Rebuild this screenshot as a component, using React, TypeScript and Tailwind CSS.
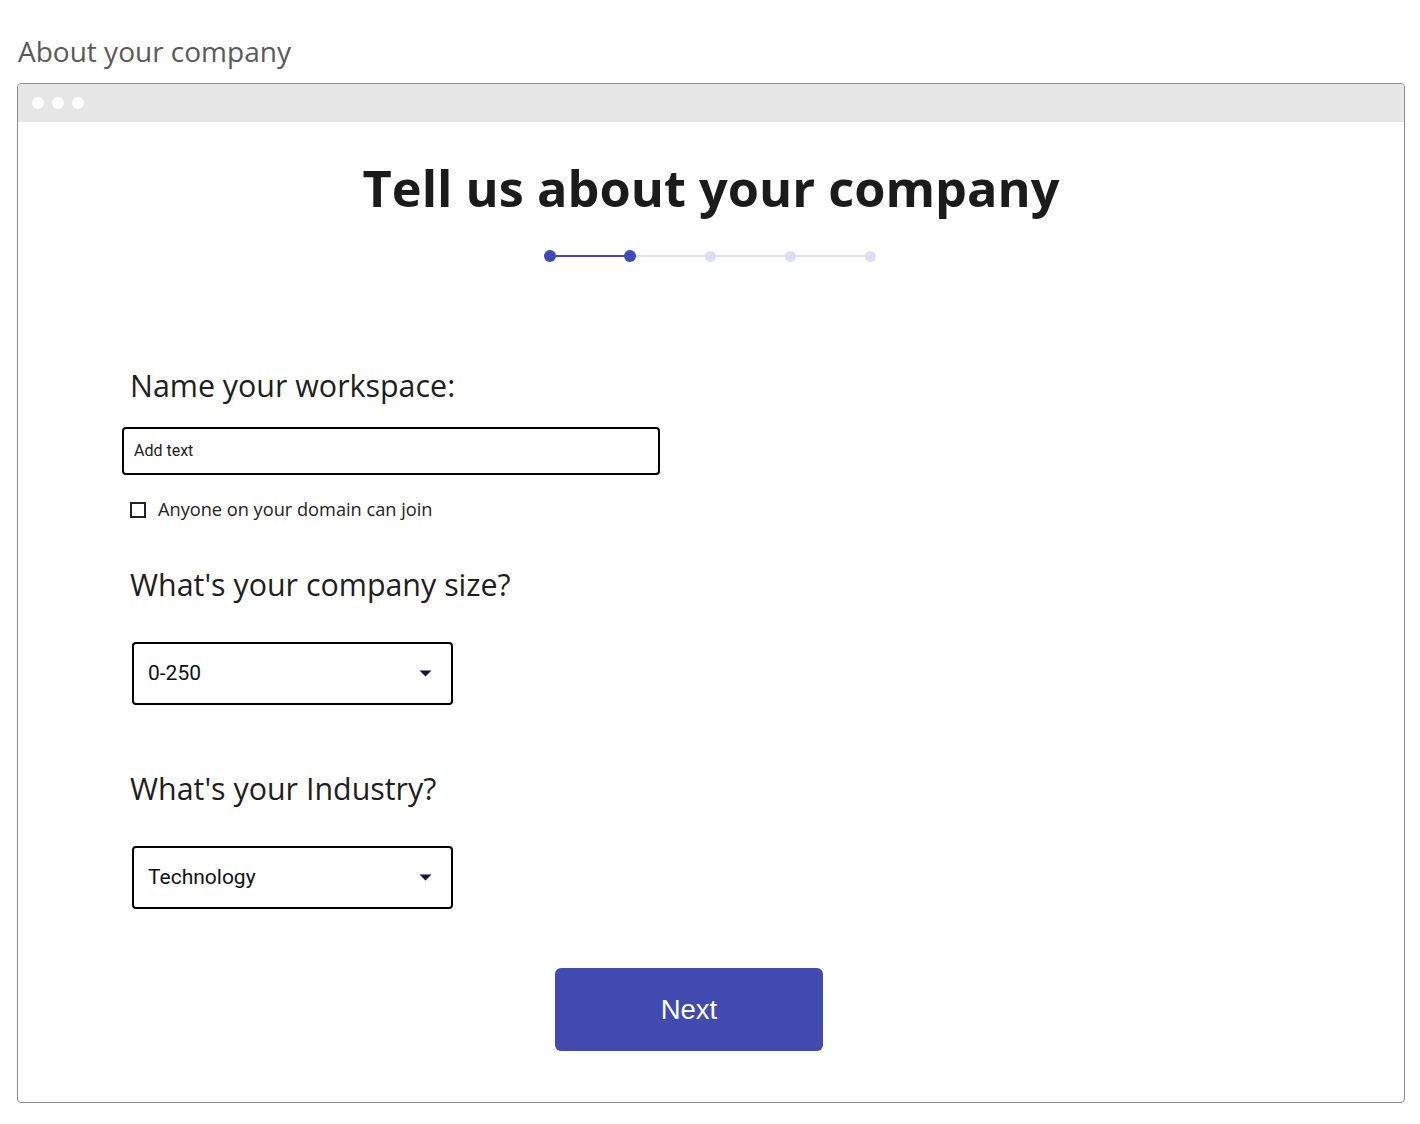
import React from "react";

const Caret = () => (
  <svg width="13" height="7" viewBox="0 0 13 7" className="shrink-0">
    <path d="M0.5 0.5 H12.5 L6.5 6.5 Z" fill="#14123a" />
  </svg>
);

function Select({ value }: { value: string }) {
  return (
    <div className="ml-[10px] flex h-[63px] w-[321px] items-center justify-between rounded-[4px] border-2 border-black pl-[14px] pr-[19px]">
      <span className="text-[21px] text-[#111] [font-family:Roboto,'Liberation_Sans',sans-serif]">{value}</span>
      <Caret />
    </div>
  );
}

export default function App() {
  const dots = [0, 1, 2, 3, 4];
  return (
    <div className="h-[1124px] w-[1420px] bg-white pl-[17px] pt-[33px] [font-family:'Open_Sans',sans-serif]">
      <h1 className="ml-[1px] text-[28px] leading-[36px] text-[#5a5a5a]">About your company</h1>
      <div className="mt-[14px] h-[1020px] w-[1388px] overflow-hidden rounded-[4px] border border-[#8c8c8c]">
        <div className="flex h-[38px] items-center gap-[8px] bg-[#e6e6e6] pl-[14px]">
          <span className="h-[12px] w-[12px] rounded-full bg-white" />
          <span className="h-[12px] w-[12px] rounded-full bg-white" />
          <span className="h-[12px] w-[12px] rounded-full bg-white" />
        </div>
        <div className="flex flex-col items-center pt-[36px]">
          <h2 className="text-[50.5px] font-bold leading-[60px] text-[#1b1b1b]">Tell us about your company</h2>
          <div className="relative mt-[32px] ml-[-2px] flex h-[12px] w-[332px] items-center justify-between">
            <div className="absolute left-[6px] right-[6px] top-[5px] h-[2px] bg-[#dfe1f4]" />
            <div className="absolute left-[6px] top-[5px] h-[2px] w-[80px] bg-[#3f4ab4]" />
            {dots.map((i) => (
              <span key={i} className="relative flex h-[12px] w-[12px] items-center justify-center">
                <span
                  className={
                    i < 2
                      ? "h-[12px] w-[12px] rounded-full bg-[#3f4ab4]"
                      : "h-[11px] w-[11px] rounded-full bg-[#dcdff3]"
                  }
                />
              </span>
            ))}
          </div>
        </div>
        <div className="flex flex-col pl-[104px]">
          <label className="mt-[104px] ml-[8px] text-[30.4px] leading-[40px] text-[#1e1e1e]">Name your workspace:</label>
          <div className="mt-[21px] flex h-[48px] w-[538px] items-center rounded-[4px] border-2 border-black pl-[10px]">
            <span className="text-[16px] text-[#222] [font-family:Roboto,'Liberation_Sans',sans-serif]">Add text</span>
          </div>
          <div className="mt-[23px] ml-[8px] flex h-[24px] items-center gap-[12px]">
            <span className="h-[16px] w-[16px] border-2 border-[#222]" />
            <span className="text-[18.2px] text-[#222]">Anyone on your domain can join</span>
          </div>
          <label className="mt-[43px] ml-[8px] text-[30.4px] leading-[40px] text-[#1e1e1e]">What's your company size?</label>
          <div className="mt-[37px]">
            <Select value="0-250" />
          </div>
          <label className="mt-[64px] ml-[8px] text-[30.4px] leading-[40px] text-[#1e1e1e]">What's your Industry?</label>
          <div className="mt-[37px]">
            <Select value="Technology" />
          </div>
          <button className="mt-[59px] ml-[433px] flex h-[83px] w-[268px] items-center justify-center rounded-[6px] bg-[#404aaf] text-[27.5px] text-white [font-family:'Liberation_Sans',Arial,sans-serif]">
            Next
          </button>
        </div>
      </div>
    </div>
  );
}
